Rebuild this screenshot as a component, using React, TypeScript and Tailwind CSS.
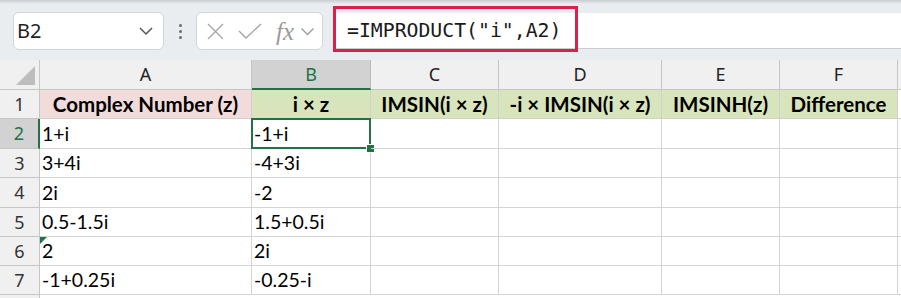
import React from "react";

const colW = ["w-[212px]", "w-[119px]", "w-[128px]", "w-[163px]", "w-[118px]", "w-[118px]"];
const rowH = ["h-[29px]", "h-[30px]", "h-[29px]", "h-[30px]", "h-[29px]", "h-[29px]", "h-[29px]"];
const letters = ["A", "B", "C", "D", "E", "F"];
const headers = ["Complex Number (z)", "i × z", "IMSIN(i × z)", "-i × IMSIN(i × z)", "IMSINH(z)", "Difference"];
const data: [string, string][] = [
  ["1+i", "-1+i"],
  ["3+4i", "-4+3i"],
  ["2i", "-2"],
  ["0.5-1.5i", "1.5+0.5i"],
  ["2", "2i"],
  ["-1+0.25i", "-0.25-i"],
];

const cellFont = { fontFamily: "Lato, 'Open Sans', sans-serif" };
const uiFont = { fontFamily: "'Noto Sans', 'Open Sans', sans-serif" };

function Toolbar() {
  return (
    <div className="relative h-[60px] bg-[#e9edf0]">
      <div className="absolute left-0 top-0 h-[4px] w-full bg-gradient-to-b from-[#c9cdd1] to-[#e9edf0]" />
      <div className="flex items-start pt-[12px] pl-[13px]">
        <div
          className="flex h-[38px] w-[151px] items-center justify-between rounded-[6px] border border-[#d3d6d9] bg-white pl-[3px] pr-[9px] text-[20px] text-[#1f1f1f]"
          style={uiFont}
        >
          <span>B2</span>
          <svg width="16" height="10" viewBox="0 0 16 10" fill="none">
            <path d="M2 2 L8 8 L14 2" stroke="#555" strokeWidth="1.5" />
          </svg>
        </div>
        <div className="flex h-[38px] w-[32px] flex-col items-center justify-center gap-[3px]">
          <div className="h-[3px] w-[3px] rounded-full bg-[#6b6b6b]" />
          <div className="h-[3px] w-[3px] rounded-full bg-[#6b6b6b]" />
          <div className="h-[3px] w-[3px] rounded-full bg-[#6b6b6b]" />
        </div>
        <div className="flex h-[38px] w-[127px] items-center rounded-[6px] border border-[#d3d6d9] bg-white">
          <svg className="ml-[9px]" width="19" height="19" viewBox="0 0 19 19" fill="none">
            <path d="M2 2 L17 17 M17 2 L2 17" stroke="#a6a6a6" strokeWidth="1.4" />
          </svg>
          <svg className="ml-[13px]" width="24" height="18" viewBox="0 0 24 18" fill="none">
            <path d="M1 9 L8 16 L23 2" stroke="#a6a6a6" strokeWidth="1.4" />
          </svg>
          <span
            className="ml-[14px] text-[25px] italic leading-none text-[#9a9a9a]"
            style={{ fontFamily: "'Liberation Serif', serif" }}
          >
            fx
          </span>
          <svg className="ml-[6px]" width="15" height="9" viewBox="0 0 15 9" fill="none">
            <path d="M1.5 1.5 L7.5 7.5 L13.5 1.5" stroke="#999" strokeWidth="1.3" />
          </svg>
        </div>
        <div className="ml-[10px] mt-[1px] flex h-[36px] flex-1 items-center border-b border-[#c9ccd0] bg-white pl-[14px]">
          <span
            className="text-[19.8px] text-[#1a1a1a]"
            style={{ fontFamily: "'DejaVu Sans Mono', 'Liberation Mono', monospace" }}
          >
            =IMPRODUCT("i",A2)
          </span>
        </div>
      </div>
      <div className="absolute left-[333px] top-[6px] h-[46px] w-[245px] border-[3px] border-[#df1f4b]" />
    </div>
  );
}

function ColumnHeaders() {
  return (
    <div className="flex h-[30px] bg-[#f0f0f0]" style={uiFont}>
      <div className="relative h-full w-[40px] border-r border-b border-[#c6c6c6]">
        <svg className="absolute bottom-[4px] right-[4px]" width="19" height="19" viewBox="0 0 19 19">
          <path d="M19 0 L19 19 L0 19 Z" fill="#bdbdbd" />
        </svg>
      </div>
      {letters.map((l, i) =>
        i === 1 ? (
          <div
            key={l}
            className={`${colW[i]} flex h-full items-center justify-center border-r border-b-2 border-r-[#b8b8b8] border-b-[#217346] bg-[#d2d2d2] text-[18px] text-[#217346]`}
          >
            {l}
          </div>
        ) : (
          <div
            key={l}
            className={`${colW[i]} flex h-full items-center justify-center border-r border-b border-[#c6c6c6] text-[18px] text-[#222]`}
          >
            {l}
          </div>
        )
      )}
      <div className="h-full flex-1 border-b border-[#c6c6c6]" />
    </div>
  );
}

function RowHeader({ n, h }: { n: number; h: string }) {
  const sel = n === 2;
  return (
    <div
      className={`${h} flex w-[40px] items-center justify-center border-b text-[18px] ${
        sel
          ? "border-r-2 border-r-[#217346] border-b-[#c6c6c6] bg-[#d2d2d2] text-[#217346]"
          : "border-r border-[#c6c6c6] bg-[#f0f0f0] text-[#333]"
      }`}
      style={uiFont}
    >
      {n}
    </div>
  );
}

function Sheet() {
  return (
    <div className="bg-white">
      <ColumnHeaders />
      <div className={`flex ${rowH[0]}`}>
        <RowHeader n={1} h={rowH[0]} />
        {headers.map((t, i) => (
          <div
            key={t}
            className={`${colW[i]} flex h-full items-center justify-center border-r border-b border-[#d0d0d0] text-[20.5px] font-bold text-black ${
              i === 0 ? "bg-[#f2dcdb]" : "bg-[#d8e4bc]"
            }`}
            style={cellFont}
          >
            {t}
          </div>
        ))}
        <div className="h-full flex-1 border-b border-[#d0d0d0]" />
      </div>
      {data.map((r, ri) => {
        const h = rowH[ri + 1];
        return (
          <div key={ri} className={`relative flex ${h} ${ri === 0 ? "z-10" : ""}`}>
            <RowHeader n={ri + 2} h={h} />
            {colW.map((w, ci) => (
              <div
                key={ci}
                className={`${w} relative flex h-full items-center border-r border-b border-[#d4d4d4] pl-[2px] text-[19.5px] text-black`}
                style={cellFont}
              >
                {ci < 2 ? r[ci] : ""}
                {ri === 4 && ci === 0 && (
                  <svg className="absolute left-0 top-0" width="7" height="7" viewBox="0 0 7 7">
                    <path d="M0 0 L7 0 L0 7 Z" fill="#217346" />
                  </svg>
                )}
                {ri === 0 && ci === 1 && (
                  <>
                    <div className="absolute -left-[1px] -top-[1px] -right-[1px] -bottom-[1px] border-2 border-[#217346]" />
                    <div className="absolute -bottom-[5px] -right-[5px] h-[9px] w-[9px] border border-white bg-[#217346]" />
                  </>
                )}
              </div>
            ))}
            <div className="h-full flex-1 border-b border-[#d4d4d4]" />
          </div>
        );
      })}
      <div className="flex h-[3px]">
        <div className="h-full w-[40px] border-r border-[#c6c6c6] bg-[#f0f0f0]" />
      </div>
    </div>
  );
}

export default function App() {
  return (
    <div className="h-[298px] w-[901px] overflow-hidden bg-white">
      <Toolbar />
      <Sheet />
    </div>
  );
}
